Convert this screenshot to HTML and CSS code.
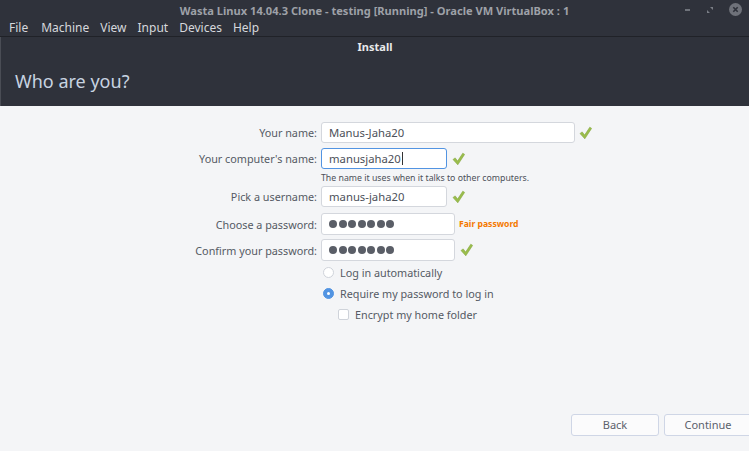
FILE: index.html
```html
<!DOCTYPE html>
<html>
<head>
<meta charset="utf-8">
<link rel="stylesheet" href="styles.css">
</head>
<body>
<div class="window">
  <div class="titlebar">
    <span class="title">Wasta Linux 14.04.3 Clone - testing [Running] - Oracle VM VirtualBox : 1</span>
    <div class="controls">
      <span class="ctl-min"></span>
      <svg class="ctl-max" width="8" height="8" viewBox="0 0 8 8"><path d="M4 1h3v3zM4 7H1V4z" fill="#7a7e86"/></svg>
      <svg class="ctl-close" width="13" height="13" viewBox="0 0 13 13"><circle cx="6.5" cy="6.5" r="6.5" fill="#6f727a"/><path d="M4.3 4.3l4.4 4.4M8.7 4.3l-4.4 4.4" stroke="#2e313a" stroke-width="1.6"/></svg>
    </div>
  </div>
  <div class="menubar">
    <span>File</span><span>Machine</span><span>View</span><span>Input</span><span>Devices</span><span>Help</span>
  </div>
  <div class="header">
    <div class="install">Install</div>
    <h1 class="heading">Who are you?</h1>
  </div>
  <div class="body">
    <div class="form">
      <label class="lbl r1">Your name:</label>
      <div class="field r1"><div class="input w-wide">Manus-Jaha20</div><svg class="ok" width="13" height="14" viewBox="0 0 13 14"><path d="M1 7.5l2.2-1.6 2.4 3.2L10.8 1.2l1.8 1.2-6.8 10.4z" fill="#9bbd4c" stroke="#83a83c" stroke-width="0.6" stroke-linejoin="round"/></svg></div>

      <label class="lbl r2">Your computer's name:</label>
      <div class="field r2"><div class="input w-mid focus">manusjaha20<span class="caret"></span></div><svg class="ok" width="13" height="14" viewBox="0 0 13 14"><path d="M1 7.5l2.2-1.6 2.4 3.2L10.8 1.2l1.8 1.2-6.8 10.4z" fill="#9bbd4c" stroke="#83a83c" stroke-width="0.6" stroke-linejoin="round"/></svg></div>

      <div class="hint">The name it uses when it talks to other computers.</div>

      <label class="lbl r3">Pick a username:</label>
      <div class="field r3"><div class="input w-mid">manus-jaha20</div><svg class="ok" width="13" height="14" viewBox="0 0 13 14"><path d="M1 7.5l2.2-1.6 2.4 3.2L10.8 1.2l1.8 1.2-6.8 10.4z" fill="#9bbd4c" stroke="#83a83c" stroke-width="0.6" stroke-linejoin="round"/></svg></div>

      <label class="lbl r4">Choose a password:</label>
      <div class="field r4"><div class="input w-pw"><span class="dots"><i></i><i></i><i></i><i></i><i></i><i></i><i></i></span></div><span class="fair">Fair password</span></div>

      <label class="lbl r5">Confirm your password:</label>
      <div class="field r5"><div class="input w-pw"><span class="dots"><i></i><i></i><i></i><i></i><i></i><i></i><i></i></span></div><svg class="ok" width="13" height="14" viewBox="0 0 13 14"><path d="M1 7.5l2.2-1.6 2.4 3.2L10.8 1.2l1.8 1.2-6.8 10.4z" fill="#9bbd4c" stroke="#83a83c" stroke-width="0.6" stroke-linejoin="round"/></svg></div>

      <div class="opt opt1"><span class="radio"></span>Log in automatically</div>
      <div class="opt opt2"><span class="radio on"></span>Require my password to log in</div>
      <div class="opt opt3"><span class="check"></span>Encrypt my home folder</div>
    </div>
    <div class="footer">
      <button class="btn">Back</button>
      <button class="btn">Continue</button>
    </div>
  </div>
</div>
</body>
</html>
```

FILE: styles.css
```css
* { box-sizing: border-box; }
html, body { margin: 0; padding: 0; }
body {
  width: 749px;
  height: 451px;
  overflow: hidden;
  font-family: "Noto Sans", "Open Sans", sans-serif;
  background: #f4f5f7;
}
.window { display: flex; flex-direction: column; height: 451px; }

.titlebar {
  height: 18px;
  background: #2f323b;
  display: flex;
  align-items: center;
  justify-content: center;
  position: relative;
}
.title {
  color: #9ea1a8;
  font-size: 11.1px;
  font-weight: bold;
  padding-top: 2px;
}
.controls {
  position: absolute;
  right: 7px;
  top: 3px;
  display: flex;
  align-items: center;
  gap: 14px;
}
.ctl-min { width: 5px; height: 2px; background: #6f737b; display: block; margin-right: 2px; }
.ctl-max { display: block; }
.ctl-close { display: block; margin-left: 1px; }

.menubar {
  height: 19px;
  background: #2f323b;
  border-bottom: 1px solid #202228;
  display: flex;
  align-items: center;
  padding-left: 9px;
  padding-top: 1px;
  color: #d6d8dc;
  font-size: 12px;
}
.menubar span:nth-child(1) { margin-right: 13px; }
.menubar span:nth-child(2) { margin-right: 11px; }
.menubar span:nth-child(3) { margin-right: 11px; }
.menubar span:nth-child(4) { margin-right: 11px; }
.menubar span:nth-child(5) { margin-right: 11px; }

.header {
  height: 69px;
  background: #2f323b;
  border-left: 1px solid #4a4d55;
  display: flex;
  flex-direction: column;
}
.install {
  text-align: center;
  color: #e8e9eb;
  font-size: 11px;
  font-weight: bold;
  margin-top: 2px;
}
.heading {
  margin: 15px 0 0 14px;
  font-size: 18px;
  font-weight: normal;
  color: #c8d4e1;
}

.body {
  flex: 1;
  background: #f4f5f7;
  display: flex;
  flex-direction: column;
}

.form {
  display: grid;
  grid-template-columns: 317px auto;
  column-gap: 4px;
  padding-top: 16px;
  color: #555a64;
  font-size: 10.8px;
}
.lbl {
  grid-column: 1;
  justify-self: end;
  align-self: center;
  color: #555a64;
}
.field {
  grid-column: 2;
  display: flex;
  align-items: center;
}
.r2 { margin-top: 5px; }
.r3 { margin-top: 0; }
.r4 { margin-top: 6px; }
.r5 { margin-top: 4px; }

.input {
  height: 21px;
  background: #ffffff;
  border: 1px solid #d4d7dd;
  border-radius: 3px;
  padding-left: 7px;
  display: flex;
  align-items: center;
  color: #4c5059;
  font-size: 11.3px;
}
.w-wide { width: 254px; }
.w-mid { width: 126px; }
.w-pw { width: 134px; height: 22px; }
.focus { border-color: #5294e2; }
.caret { display: inline-block; width: 1px; height: 13px; background: #333; margin-left: 1px; }
.dots { display: flex; gap: 1.5px; }
.dots i { display: block; width: 8px; height: 8px; border-radius: 50%; background: #5a5e67; }
.ok { margin-left: 5px; display: block; }
.w-wide + .ok { margin-left: 4px; }
.fair {
  margin-left: 4px;
  color: #f57900;
  font-weight: bold;
  font-size: 8.6px;
}
.hint {
  grid-column: 2;
  font-size: 8.75px;
  line-height: 16px;
  padding-top: 1px;
  height: 17px;
  color: #4c5059;
}

.opt {
  grid-column: 2;
  display: flex;
  align-items: center;
  height: 21px;
  font-size: 10.8px;
  color: #555a64;
}
.opt1 { margin-top: 1px; padding-left: 2px; }
.opt2 { padding-left: 2px; }
.opt3 { padding-left: 17px; }
.radio {
  width: 11px;
  height: 11px;
  border-radius: 50%;
  border: 1px solid #cfd3da;
  background: #fff;
  margin-right: 6px;
  position: relative;
}
.radio.on { background: #5294e2; border-color: #5294e2; }
.radio.on::after {
  content: "";
  position: absolute;
  left: 3px; top: 3px;
  width: 3px; height: 3px;
  border-radius: 50%;
  background: #fff;
}
.check {
  width: 11px;
  height: 11px;
  border: 1px solid #cfd3da;
  border-radius: 2px;
  background: #fff;
  margin-right: 6px;
}

.footer {
  margin-top: auto;
  display: flex;
  justify-content: flex-end;
  gap: 5px;
  margin-right: -3px;
  padding-bottom: 15px;
}
.btn {
  width: 88px;
  height: 22px;
  background: #fbfbfc;
  border: 1px solid #cfd6e6;
  border-radius: 3px;
  color: #5c616c;
  font-family: "Noto Sans", "Open Sans", sans-serif;
  font-size: 11px;
  line-height: 18px;
  padding: 0;
}
```
